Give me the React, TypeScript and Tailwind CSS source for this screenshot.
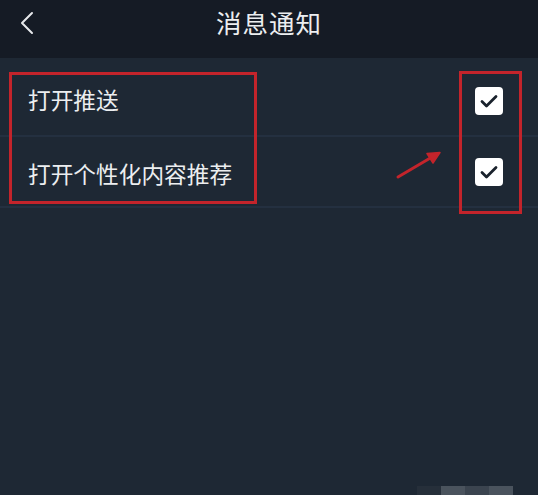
import React from 'react';

const rows = ['打开推送', '打开个性化内容推荐'];

function CheckBox() {
  return (
    <div className="w-[28px] h-[28px] rounded-[4px] bg-white flex items-center justify-center">
      <svg width="20" height="16" viewBox="0 0 20 16" fill="none">
        <path d="M3 8.5l4.5 4.5L17 3.5" stroke="#1a222c" strokeWidth="2.8" strokeLinecap="round" strokeLinejoin="round" />
      </svg>
    </div>
  );
}

export default function App() {
  return (
    <div
      className="relative w-[538px] h-[495px] overflow-hidden flex flex-col bg-[#1e2834] text-[#eceef0]"
      style={{ fontFamily: '"Noto Sans CJK SC", "Noto Sans", sans-serif' }}
    >
      {/* Header */}
      <div className="relative h-[58px] shrink-0 bg-[#151b25] flex items-center justify-center">
        <button className="absolute left-[14px] top-[10px] w-[26px] h-[26px] flex items-center justify-center">
          <svg width="18" height="24" viewBox="0 0 18 24" fill="none">
            <path d="M14 2L4 12l10 10" stroke="#e6e8eb" strokeWidth="2" strokeLinecap="round" strokeLinejoin="round" />
          </svg>
        </button>
        <h1 className="text-[25.5px] leading-none -mt-[15px] tracking-[1px]">消息通知</h1>
      </div>

      {/* List */}
      <div className="pt-[8px] flex-1">
        {rows.map((label, i) => (
          <div key={label} className="h-[71px] flex items-center justify-between pl-[28px] pr-[35px] border-b-2 border-[#243040]">
            <span className={`text-[22.7px] leading-none ${i === 1 ? 'mt-[6px]' : ''}`}>{label}</span>
            <CheckBox />
          </div>
        ))}
      </div>

      {/* Annotations */}
      <div className="absolute left-[9px] top-[72px] w-[248px] h-[132px] border-[3px] border-[#c3242b]" />
      <div className="absolute left-[459px] top-[71px] w-[63px] h-[143px] border-[3px] border-[#c3242b]" />
      <svg className="absolute left-[394px] top-[146px]" width="52" height="36" viewBox="0 0 52 36" fill="none">
        <path d="M4 31L38 11" stroke="#c3242b" strokeWidth="3" strokeLinecap="round" />
        <path d="M46 6.5L33 7.5l6 9.5z" fill="#c3242b" stroke="#c3242b" strokeWidth="1.5" strokeLinejoin="round" />
      </svg>

      {/* bottom strip */}
      <div className="absolute left-[417px] bottom-0 h-[9px] flex">
        <div className="w-[24px] bg-[#262f3a]" />
        <div className="w-[24px] bg-[#4a535d]" />
        <div className="w-[24px] bg-[#3b444f]" />
        <div className="w-[24px] bg-[#4a535d]" />
      </div>
    </div>
  );
}
